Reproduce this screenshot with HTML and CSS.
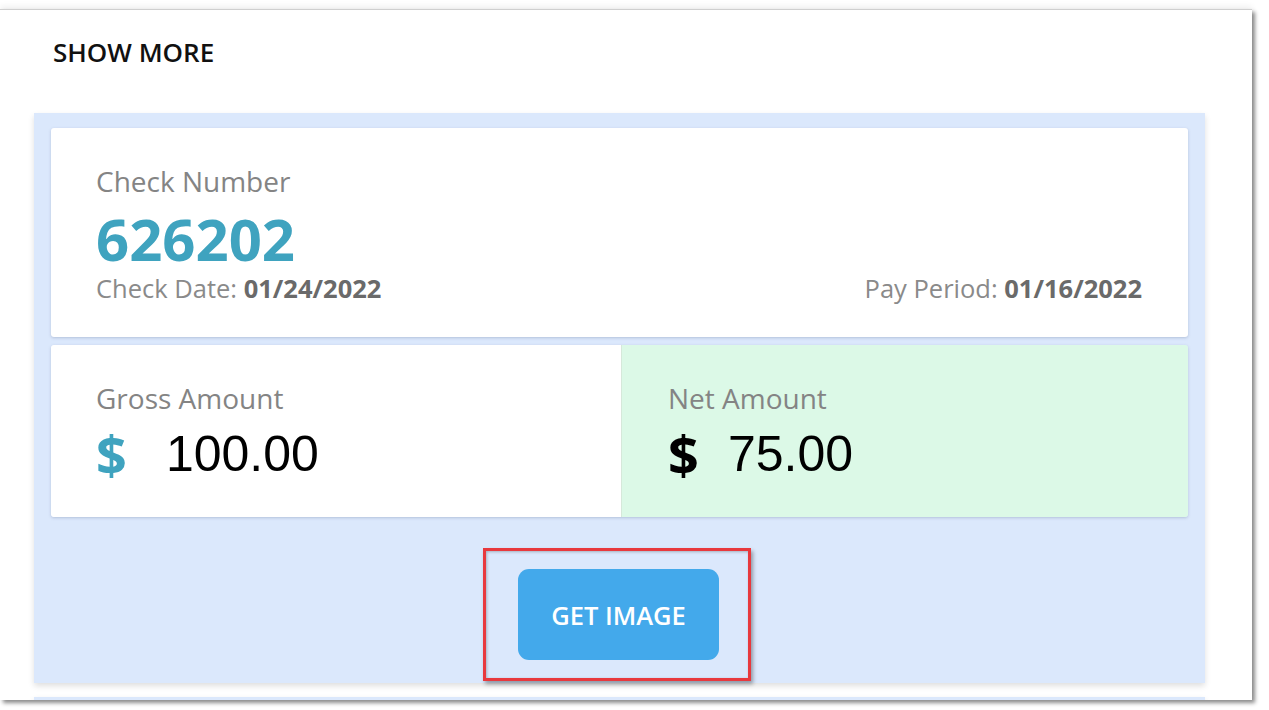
FILE: index.html
```html
<!DOCTYPE html>
<html lang="en">
<head>
<meta charset="utf-8">
<title>Check</title>
<link rel="stylesheet" href="styles.css">
</head>
<body>
<div class="frame">
  <div class="show-more">SHOW MORE</div>
  <section class="check">
    <div class="card info">
      <div class="label">Check Number</div>
      <div class="check-no">626202</div>
      <div class="dates">
        <span>Check Date: <b>01/24/2022</b></span>
        <span>Pay Period: <b>01/16/2022</b></span>
      </div>
    </div>
    <div class="amounts">
      <div class="amount gross">
        <div class="label">Gross Amount</div>
        <div class="value"><span class="dollar">$</span><span class="num num-wide">100.00</span></div>
      </div>
      <div class="amount net">
        <div class="label">Net Amount</div>
        <div class="value"><span class="dollar">$</span><span class="num">75.00</span></div>
      </div>
    </div>
    <div class="actions">
      <div class="btn-wrap">
        <button class="btn">GET IMAGE</button>
        <span class="highlight"></span>
      </div>
    </div>
  </section>
  <section class="check next"></section>
</div>
</body>
</html>
```

FILE: styles.css
```css
html, body {
  margin: 0;
  padding: 0;
  background: #ffffff;
}
body {
  font-family: "Open Sans", "Liberation Sans", sans-serif;
  padding-top: 9px;
  height: 710px;
  box-sizing: border-box;
  overflow: hidden;
}
.frame {
  width: 1252px;
  height: 691px;
  background: #ffffff;
  overflow: hidden;
  box-sizing: border-box;
  border-top: 1px solid #cfcfcf;
  box-shadow: 3px 3px 4px rgba(0, 0, 0, 0.45), 0 -3px 6px rgba(0, 0, 0, 0.06);
  padding-left: 34px;
}
.show-more {
  margin-left: 19px;
  padding-top: 25px;
  height: 103px;
  box-sizing: border-box;
  font-size: 26px;
  font-weight: 600;
  color: #111111;
  line-height: 34px;
}
.check {
  width: 1171px;
  background: #dbe8fc;
  padding: 15px 17px 0 17px;
  box-sizing: border-box;
  box-shadow: 0 3px 6px rgba(0, 0, 0, 0.13);
  height: 570px;
}
.check.next {
  margin-top: 14px;
  height: 60px;
}
.card {
  background: #ffffff;
  border-radius: 3px;
  box-shadow: 0 1px 3px rgba(60, 80, 120, 0.25);
}
.info {
  height: 209px;
  box-sizing: border-box;
  padding: 34px 46px 0 45px;
}
.label {
  font-size: 28px;
  color: #848484;
  line-height: 38px;
}
.check-no {
  font-size: 58px;
  font-weight: 700;
  color: #3fa3bf;
  line-height: 58px;
  margin-top: 10px;
}
.dates {
  display: flex;
  justify-content: space-between;
  font-size: 25.5px;
  color: #8a8a8a;
  line-height: 34px;
  margin-top: 3px;
}
.dates b {
  font-weight: 700;
  color: #6a6a6a;
}
.amounts {
  display: flex;
  margin-top: 8px;
  height: 172px;
  border-radius: 3px;
  box-shadow: 0 1px 3px rgba(60, 80, 120, 0.25);
}
.amount {
  box-sizing: border-box;
  padding-top: 34px;
}
.gross {
  flex: 0 0 570px;
  background: #ffffff;
  padding-left: 45px;
  border-radius: 3px 0 0 3px;
}
.net {
  flex: 1;
  background: #dcf9e7;
  padding-left: 46px;
  border-left: 1px solid #d6e8da;
  border-radius: 0 3px 3px 0;
}
.value {
  display: flex;
  align-items: center;
  margin-top: 9px;
  height: 56px;
}
.dollar {
  font-family: "Open Sans", sans-serif;
  font-weight: 700;
  font-size: 54px;
  line-height: 56px;
}
.gross .dollar {
  color: #3fa3bf;
}
.net .dollar {
  color: #000000;
}
.num {
  font-family: "Liberation Sans", Arial, sans-serif;
  font-size: 50px;
  color: #000000;
  line-height: 56px;
  margin-left: 29px;
}
.num-wide {
  margin-left: 39px;
}
.actions {
  display: flex;
  justify-content: center;
  margin-top: 52px;
}
.btn-wrap {
  position: relative;
  margin-left: -2px;
}
.btn {
  display: block;
  width: 201px;
  height: 91px;
  border: none;
  border-radius: 11px;
  background: #43a9eb;
  color: #ffffff;
  font-family: "Open Sans", sans-serif;
  font-size: 25.5px;
  font-weight: 600;
  padding: 0;
}
.highlight {
  position: absolute;
  top: -21px;
  bottom: -21px;
  left: -35px;
  right: -32px;
  border: 3px solid #e8383d;
  box-shadow: 2px 3px 4px rgba(0, 0, 0, 0.35), inset 1px 1px 3px rgba(0, 0, 0, 0.25);
  pointer-events: none;
}
```
